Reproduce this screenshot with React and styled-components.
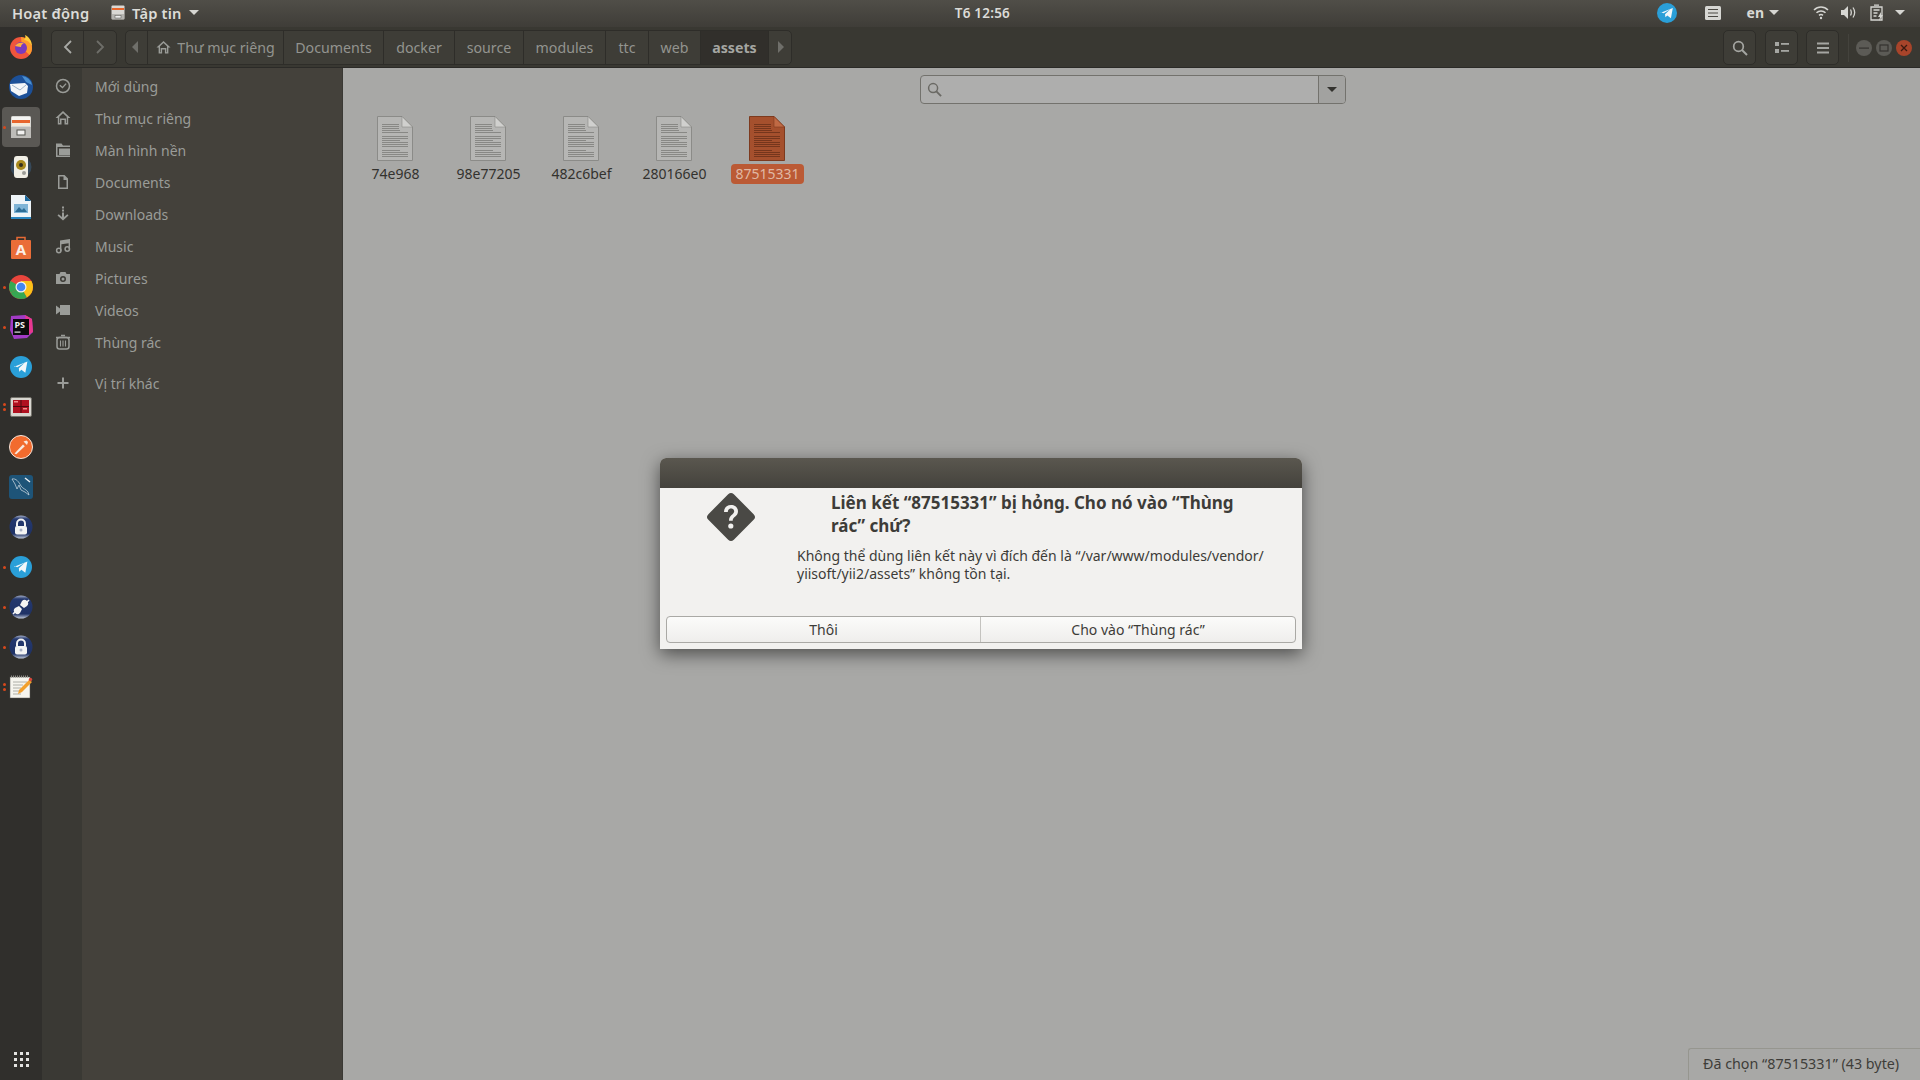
import styled, { createGlobalStyle } from 'styled-components';

const GlobalStyle = createGlobalStyle`
  html, body {
    margin: 0;
    padding: 0;
    background: #a8a8a6;
  }
  * {
    box-sizing: border-box;
  }
`;

const Screen = styled.div`
  position: relative;
  width: 1920px;
  height: 1080px;
  overflow: hidden;
  display: flex;
  flex-direction: column;
  font-family: "Noto Sans", "Open Sans", sans-serif;
`;

/* top panel */
const TopBar = styled.div`
  height: 27px;
  flex: none;
  display: grid;
  grid-template-columns: 1fr auto 910px;
  align-items: center;
  padding-bottom: 2px;
  background: linear-gradient(#504e48, #3f3d38);
  color: #dcdcd8;
  font-size: 14.7px;
  letter-spacing: 0.2px;
`;
const PanelLeft = styled.div`
  display: flex;
  align-items: center;
  padding-left: 12px;
`;
const PanelRight = styled.div`
  display: flex;
  align-items: center;
  justify-content: flex-end;
  padding-right: 14px;
`;
const ActivitiesLabel = styled.span`
  font-weight: 600;
  width: 99px;
`;
const AppMenu = styled.div`
  display: flex;
  align-items: center;
  gap: 7px;
  font-weight: 600;
`;
const ClockLabel = styled.span`
  font-size: 13.5px;
  font-weight: 600;
`;
const Caret = styled.i`
  display: block;
  width: 0;
  height: 0;
  border-left: 5px solid transparent;
  border-right: 5px solid transparent;
  border-top: 5px solid ${(props) => props.color || '#d6d6d2'};
`;
const Tray = styled.div`
  width: ${(props) => props.w}px;
  margin-right: ${(props) => props.mr || 0}px;
  display: flex;
  align-items: center;
  justify-content: center;
  gap: 5px;
`;
const LangLabel = styled.span`
  font-weight: 700;
  font-size: 14px;
  color: #d8d8d4;
`;

/* body */
const Body = styled.div`
  flex: 1;
  display: flex;
  min-height: 0;
`;
const Dock = styled.div`
  width: 42px;
  flex: none;
  display: flex;
  flex-direction: column;
  background: #302f2c;
`;
const DockItem = styled.div`
  position: relative;
  height: 40px;
  margin: 0 2px;
  display: flex;
  align-items: center;
  justify-content: center;
  border-radius: 4px;
  background: ${(props) => (props.active ? '#5a5854' : 'transparent')};
`;
const DockDots = styled.div`
  position: absolute;
  left: 1px;
  top: 0;
  bottom: 0;
  display: flex;
  flex-direction: column;
  justify-content: center;
  gap: 2px;
`;
const DockDot = styled.i`
  display: block;
  width: 3px;
  height: 3px;
  border-radius: 50%;
  background: #d8481c;
`;
const AppGrid = styled.div`
  margin-top: auto;
  margin-bottom: 13px;
  align-self: center;
  display: grid;
  grid-template-columns: repeat(3, 3px);
  gap: 3px;
`;
const AppGridDot = styled.i`
  display: block;
  width: 3px;
  height: 3px;
  background: #e4e4e2;
`;

const Win = styled.div`
  flex: 1;
  display: flex;
  flex-direction: column;
  min-width: 0;
`;
const Header = styled.div`
  height: 41px;
  flex: none;
  display: flex;
  align-items: center;
  padding: 1px 0 0 9px;
  background: #393832;
  border-bottom: 1px solid #2b2a27;
`;
const BtnGroup = styled.div`
  height: 35px;
  display: flex;
  border: 1px solid #2e2d29;
  border-radius: 5px;
  background: #3e3d37;
  margin-left: ${(props) => props.ml || 0}px;
`;
const SegBtn = styled.div`
  width: ${(props) => props.w}px;
  display: flex;
  align-items: center;
  justify-content: center;
  gap: 6px;
  padding: 0 ${(props) => props.pr || 0}px 1px ${(props) => props.pl || 0}px;
  color: ${(props) => (props.current ? '#a5a6a2' : '#93948f')};
  font-size: 14.2px;
  font-weight: ${(props) => (props.current ? 700 : 400)};
  background: ${(props) => (props.current ? '#312f2b' : 'transparent')};
  border-right: 1px solid #2e2d29;
  &:last-child {
    border-right: 0;
  }
`;
const ToolBtn = styled.div`
  width: 33px;
  height: 35px;
  margin-left: ${(props) => props.ml}px;
  display: flex;
  align-items: center;
  justify-content: center;
  border: 1px solid #2e2d29;
  border-radius: 5px;
  background: #3e3d37;
`;
const WinButtons = styled.div`
  margin-left: 9px;
  padding-left: 7px;
  border-left: 1px solid #44433d;
  height: 28px;
  display: flex;
  align-items: center;
  gap: 4px;
`;
const WinBtn = styled.div`
  width: 16px;
  height: 16px;
  border-radius: 50%;
  display: flex;
  align-items: center;
  justify-content: center;
  background: ${(props) => (props.close ? '#a8442a' : '#5c5b56')};
`;

const Content = styled.div`
  flex: 1;
  display: flex;
  min-height: 0;
`;
const Sidebar = styled.div`
  width: 301px;
  flex: none;
  padding-top: 2px;
  background: linear-gradient(90deg, #3a3934 0, #3a3934 40px, #44413b 40px);
  border-right: 1px solid #3a3934;
`;
const SideRow = styled.div`
  height: 32px;
  display: flex;
  align-items: center;
  margin-top: ${(props) => props.mt || 0}px;
  color: #9a9c98;
  font-size: 14px;
`;
const SideIcon = styled.div`
  width: 41px;
  flex: none;
  display: flex;
  justify-content: center;
  margin-right: 12px;
`;
const Main = styled.div`
  position: relative;
  flex: 1;
  display: flex;
  flex-direction: column;
  background: #a8a8a6;
`;
const SearchRow = styled.div`
  display: flex;
  padding: 7px 0 0 577px;
`;
const SearchBox = styled.div`
  width: 426px;
  height: 29px;
  display: flex;
  align-items: center;
  justify-content: space-between;
  border: 1px solid #73726d;
  border-radius: 4px;
  background: #aeaead;
  padding-left: 6px;
`;
const SearchDrop = styled.div`
  width: 27px;
  height: 100%;
  display: flex;
  align-items: center;
  justify-content: center;
  border-left: 1px solid #73726d;
  background: #a2a2a0;
  border-radius: 0 3px 3px 0;
`;
const FileGrid = styled.div`
  display: flex;
  gap: 0;
  padding: 12px 0 0 5px;
`;
const FileCell = styled.div`
  width: 93px;
  display: flex;
  flex-direction: column;
  align-items: center;
  gap: 3px;
`;
const FileName = styled.span`
  height: 20px;
  line-height: 19px;
  padding: 0 4px;
  margin-left: 2px;
  border-radius: 4px;
  font-size: 14px;
  color: ${(props) => (props.selected ? '#e0b8a4' : '#33322e')};
  background: ${(props) => (props.selected ? '#bb5a35' : 'transparent')};
`;
const StatusTag = styled.div`
  position: absolute;
  right: 0;
  bottom: 0;
  width: 232px;
  height: 32px;
  padding: 0 0 2px 14px;
  display: flex;
  align-items: center;
  font-size: 14.3px;
  color: #3e3d39;
  background: #a8a8a6;
  border-top: 1px solid #96968f;
  border-left: 1px solid #96968f;
  border-top-left-radius: 3px;
`;

/* dialog */
const Dialog = styled.div`
  position: absolute;
  left: 660px;
  top: 458px;
  width: 642px;
  height: 191px;
  display: flex;
  flex-direction: column;
  border-radius: 6px 6px 0 0;
  background: #f2f1ef;
  box-shadow: 0 5px 18px rgba(0, 0, 0, 0.55);
`;
const DialogTitle = styled.div`
  height: 30px;
  flex: none;
  border-radius: 6px 6px 0 0;
  background: linear-gradient(#5a574f, #44423c);
`;
const DialogBody = styled.div`
  flex: 1;
  position: relative;
  padding: 3px 0 0 137px;
  color: #3d3c38;
`;
const QuestionWrap = styled.div`
  position: absolute;
  left: 46px;
  top: 4px;
`;
const DialogHeading = styled.div`
  margin-left: 34px;
  width: 410px;
  font-size: 17px;
  font-weight: 700;
  line-height: 23px;
`;
const DialogText = styled.div`
  margin-top: 10px;
  width: 490px;
  font-size: 14px;
  line-height: 18px;
`;
const DialogActions = styled.div`
  margin: 0 6px 6px 6px;
  height: 27px;
  flex: none;
  display: grid;
  grid-template-columns: 313px 1fr;
  border: 1px solid #aaa9a5;
  border-radius: 4px;
  background: linear-gradient(#fbfbfa, #efeeec);
`;
const DialogBtn = styled.div`
  display: flex;
  align-items: center;
  justify-content: center;
  font-size: 14px;
  color: #3d3c38;
  & + & {
    border-left: 1px solid #c4c3bf;
  }
`;

/* drawings */
const Sym = ({ size = 16, color = '#9a9c98', children }) => (
  <svg width={size} height={size} viewBox="0 0 16 16" fill={color} stroke="none">
    {children}
  </svg>
);

const sideIcons = {
  clock: (
    <>
      <circle cx="8" cy="8" r="6.500" fill="none" stroke="#9a9c98" strokeWidth="1.500" />
      <path d="M4.800 7.200l2.700 2.400 3.600-4" fill="none" stroke="#9a9c98" strokeWidth="1.400" />
    </>
  ),
  home: (
    <path
      d="M8 1L0.500 8h2.300v6.500h3.700V10h3v4.500h3.700V8h2.300L8 1zM8 3.200l3.700 3.500v6.300h-.7V8.500H5V13h-.7V6.700L8 3.200z"
      fillRule="evenodd"
    />
  ),
  folder: (
    <>
      <path d="M1 1.500h5.500L8 3.500h7v1.500H1z" />
      <path d="M1 5h1.500v8.500H15V15H1zM4 6.500h11V13H4z" />
    </>
  ),
  file: <path d="M3 1h6.500L13 4.500V15H3V1zm1.500 1.500v11h7V6H8.500V2.500h-4z" fillRule="evenodd" />,
  download: (
    <>
      <rect x="7" y="0.500" width="2" height="2" />
      <rect x="7" y="3.500" width="2" height="2" />
      <path d="M7 6.500h2V11l3.300-2.800 1.200 1.300L8 14.500 2.500 9.500l1.200-1.300L7 11V6.500z" />
    </>
  ),
  music: (
    <>
      <path d="M5 2.500L15 1v10h-1.400V5.200L6.400 6.200V13H5V2.500z" />
      <circle cx="3.800" cy="12.500" r="2.200" fill="none" stroke="#9a9c98" strokeWidth="1.500" />
      <circle cx="12.300" cy="11" r="2.200" fill="none" stroke="#9a9c98" strokeWidth="1.500" />
    </>
  ),
  camera: (
    <path
      d="M5.500 2h5l1 2H15v10H1V4h3.500l1-2zM8 6a3 3 0 100 6 3 3 0 000-6zm0 1.500a1.500 1.500 0 110 3 1.500 1.500 0 010-3z"
      fillRule="evenodd"
    />
  ),
  video: <path d="M5 3h10v10H5V9.500L1 12.500v-9l4 3V3z" />,
  trash: (
    <>
      <path d="M1 3.500h14M6 1.500h4" stroke="#9a9c98" strokeWidth="1.400" fill="none" />
      <rect x="2" y="3.500" width="12" height="11.500" rx="2.500" fill="none" stroke="#9a9c98" strokeWidth="1.500" />
      <path d="M5.500 6.500v6M8 6.500v6M10.500 6.500v6" stroke="#9a9c98" strokeWidth="1.100" fill="none" />
    </>
  ),
  plus: <path d="M7 2.500h2V7h4.500v2H9v4.500H7V9H2.500V7H7V2.500z" />,
};

const TelegramIcon = ({ size = 22 }) => (
  <svg width={size} height={size} viewBox="0 0 24 24">
    <circle cx="12" cy="12" r="12" fill="#2a9fd8" />
    <path d="M4.500 11.800L19 6l-2.300 12.200-4.300-3.200-2.300 2.200-.5-3.800 6.400-6-8 5-3.500-1.400z" fill="#f2f7fa" />
  </svg>
);

const LockIcon = () => (
  <svg width="24" height="24" viewBox="0 0 24 24">
    <defs>
      <linearGradient id="lockGlobe" x1="0" y1="0" x2="0" y2="1">
        <stop offset="0" stopColor="#a5afc8" />
        <stop offset="0.15" stopColor="#24386e" />
        <stop offset="0.8" stopColor="#1f3266" />
        <stop offset="1" stopColor="#c3cbdc" />
      </linearGradient>
    </defs>
    <circle cx="12" cy="12" r="11.500" fill="url(#lockGlobe)" />
    <path d="M8 11.500V8.500a4 4 0 018 0v3" fill="none" stroke="#f2f2f2" strokeWidth="2" />
    <rect x="6" y="11" width="12" height="8.500" rx="2" fill="#f4f4f4" />
    <circle cx="12" cy="15" r="1.500" fill="#a8b0c4" />
  </svg>
);

const dockIcons = [
  {
    key: 'firefox',
    icon: (
      <svg width="24" height="24" viewBox="0 0 24 24">
        <circle cx="12" cy="13" r="11" fill="#f0553c" />
        <path d="M12 2c6 1 11 5 11 11 0 3-1 5-2.500 7L13 13z" fill="#ff9a2c" />
        <path d="M16 0c1 2 0 4-1 5 3 0 6 2 8 6 0-5-3-9-7-11z" fill="#ffcb3a" />
        <circle cx="12" cy="13" r="6" fill="#7a3bbd" />
        <path d="M6 11c2-3 5-4 9-3-2 1-3 2-3 4-3 0-4-1-6-1z" fill="#ffb13a" />
      </svg>
    ),
  },
  {
    key: 'thunderbird',
    icon: (
      <svg width="24" height="24" viewBox="0 0 24 24">
        <circle cx="12" cy="12" r="12" fill="#1c5098" />
        <path d="M13 1a11 11 0 0110 9l-6-3z" fill="#4a8fd0" />
        <path d="M1 9l15-1 3 3-1 7-8 3-8-5z" fill="#f4f6f8" />
        <path d="M3 10l8 5 6-5" fill="none" stroke="#9fb3c8" strokeWidth="1" />
      </svg>
    ),
  },
  {
    key: 'files',
    active: true,
    dots: 1,
    icon: (
      <svg width="22" height="24" viewBox="0 0 22 24">
        <rect x="1" y="1" width="20" height="22" rx="1.500" fill="#d9d8d4" />
        <rect x="2" y="2" width="18" height="3" fill="#f4f4f2" />
        <rect x="2" y="5" width="18" height="3" fill="#e8662c" />
        <rect x="2" y="8" width="18" height="3" fill="#f5ead8" />
        <rect x="1" y="12" width="20" height="11" fill="#bdbcb8" />
        <rect x="7" y="15" width="8" height="5" fill="#f1f1ef" stroke="#55544f" />
      </svg>
    ),
  },
  {
    key: 'rhythmbox',
    icon: (
      <svg width="22" height="24" viewBox="0 0 22 24">
        <circle cx="11" cy="12" r="10.500" fill="#3b5a78" opacity="0.6" />
        <rect x="4" y="1" width="14" height="22" rx="3" fill="#f1efe6" />
        <circle cx="11" cy="10" r="5" fill="#a88a1e" />
        <circle cx="11" cy="10" r="2" fill="#332f20" />
        <circle cx="14" cy="18" r="2" fill="#9d9d98" />
      </svg>
    ),
  },
  {
    key: 'draw',
    icon: (
      <svg width="20" height="24" viewBox="0 0 20 24">
        <path d="M0 0h14l6 6v18H0z" fill="#eef4f8" />
        <path d="M14 0l6 6h-6z" fill="#1b6aa0" />
        <rect x="3" y="9" width="14" height="9" fill="#7fb4d6" />
        <path d="M4 17l4-5 3 3 2-2 3 4z" fill="#2c6d96" />
        <rect y="22" width="20" height="2" fill="#2a86c0" />
      </svg>
    ),
  },
  {
    key: 'software',
    icon: (
      <svg width="22" height="24" viewBox="0 0 22 24">
        <path d="M7 5V2.500h8V5" fill="none" stroke="#e66a34" strokeWidth="1.500" />
        <rect x="1" y="5" width="20" height="19" rx="1" fill="#ea6d38" />
        <text x="11" y="20" textAnchor="middle" fontFamily="Noto Sans, sans-serif" fontWeight="700" fontSize="15" fill="#fbeee6">
          A
        </text>
      </svg>
    ),
  },
  {
    key: 'chrome',
    dots: 1,
    icon: (
      <svg width="24" height="24" viewBox="0 0 24 24">
        <circle cx="12" cy="12" r="12" fill="#e8453c" />
        <path d="M12 12L1.600 18A12 12 0 0012 24a12 12 0 006-1.600z" fill="#36a852" />
        <path d="M12 12h12a12 12 0 00-1.600-6H12zM12 12l6 10.400A12 12 0 0024 12z" fill="#fbc118" />
        <path d="M12 12L1.600 6A12 12 0 000 12a12 12 0 001.600 6z" fill="#36a852" />
        <circle cx="12" cy="12" r="5.500" fill="#f4f4f4" />
        <circle cx="12" cy="12" r="4.300" fill="#4587f0" />
      </svg>
    ),
  },
  {
    key: 'phpstorm',
    dots: 1,
    icon: (
      <svg width="24" height="24" viewBox="0 0 24 24">
        <path d="M2 1l14-1 7 4 1 13-6 6-13 1-4-9z" fill="#a23bc6" />
        <path d="M16 0l7 4 1 13-5 3z" fill="#e8388e" />
        <rect x="4" y="4" width="16" height="16" fill="#0b0b0d" />
        <text x="5.500" y="13" fontFamily="Noto Sans, sans-serif" fontWeight="700" fontSize="9" fill="#f2f2f2">
          PS
        </text>
        <rect x="5.500" y="16.500" width="6" height="1.200" fill="#e4e4e4" />
      </svg>
    ),
  },
  { key: 'telegram', icon: <TelegramIcon /> },
  {
    key: 'redis',
    dots: 2,
    icon: (
      <svg width="22" height="20" viewBox="0 0 22 20">
        <rect x="0.500" y="0.500" width="21" height="19" rx="1.500" fill="#d8d6d0" stroke="#75736c" />
        <rect x="3" y="3" width="16" height="13" fill="#b01020" />
        <path d="M11 3v13M3 9.500h16" stroke="#4a0a10" strokeWidth="1" />
        <rect x="4" y="4" width="4" height="1.500" fill="#f28a8a" />
        <rect x="13" y="11" width="4" height="1.500" fill="#f28a8a" />
      </svg>
    ),
  },
  {
    key: 'postman',
    icon: (
      <svg width="24" height="24" viewBox="0 0 24 24">
        <circle cx="12" cy="12" r="11.500" fill="#f26b2e" stroke="#f5e6dc" strokeWidth="1" />
        <path d="M5.500 18.500L14 9.500l1.800 1.800-8.500 8z" fill="#f7e9df" />
        <path d="M14.500 6.500l3-1 1.500 1.500-1 3z" fill="#f7e9df" />
      </svg>
    ),
  },
  {
    key: 'workbench',
    icon: (
      <svg width="24" height="24" viewBox="0 0 24 24">
        <rect width="24" height="24" rx="3" fill="#1e5478" />
        <path d="M3 4c4-1 7 3 9 7 2 3 5 3 7 6l1 3-4-3-4-2-2-5-2 4-2-5z" fill="none" stroke="#d5dfe6" strokeWidth="0.700" />
        <path d="M16 3l5 4" stroke="#eef2f5" strokeWidth="1.500" />
      </svg>
    ),
  },
  { key: 'lock-a', icon: <LockIcon /> },
  { key: 'telegram-b', dots: 1, icon: <TelegramIcon /> },
  {
    key: 'plug',
    dots: 1,
    icon: (
      <svg width="24" height="24" viewBox="0 0 24 24">
        <circle cx="12" cy="12" r="11.500" fill="url(#lockGlobe)" />
        <path d="M4 19l3-3M20 5l-3 3" stroke="#f4f4f4" strokeWidth="1.600" />
        <path d="M6 13l4-2 3 3-2 4a3 3 0 01-5-5zM13 6a3 3 0 015 5l-3 2-4-3z" fill="#f4f4f4" />
      </svg>
    ),
  },
  { key: 'lock-b', dots: 1, icon: <LockIcon /> },
  {
    key: 'notes',
    dots: 2,
    icon: (
      <svg width="24" height="24" viewBox="0 0 24 24">
        <rect x="1" y="2" width="20" height="21" fill="#f6f5ee" stroke="#55544f" strokeWidth="0.500" />
        <path d="M2 1.500h18" stroke="#8d8c86" strokeWidth="2" strokeDasharray="1 1" />
        <path d="M4 7h14M4 10h10M4 13h8M4 16h8M4 19h8" stroke="#9d9c95" strokeWidth="0.800" />
        <path d="M9 19l1-4L20 5l3 2-10 10z" fill="#f2a02c" />
        <circle cx="21.500" cy="4.500" r="1.700" fill="#d8483c" />
      </svg>
    ),
  },
];

const sidebarItems = [
  { label: 'Mới dùng', icon: 'clock' },
  { label: 'Thư mục riêng', icon: 'home' },
  { label: 'Màn hình nền', icon: 'folder' },
  { label: 'Documents', icon: 'file' },
  { label: 'Downloads', icon: 'download' },
  { label: 'Music', icon: 'music' },
  { label: 'Pictures', icon: 'camera' },
  { label: 'Videos', icon: 'video' },
  { label: 'Thùng rác', icon: 'trash' },
  { label: 'Vị trí khác', icon: 'plus', mt: 9 },
];

const crumbs = [
  { label: 'Documents', w: 100 },
  { label: 'docker', w: 71 },
  { label: 'source', w: 69 },
  { label: 'modules', w: 82 },
  { label: 'ttc', w: 43 },
  { label: 'web', w: 52 },
  { label: 'assets', w: 68, current: true },
];

const files = ['74e968', '98e77205', '482c6bef', '280166e0', '87515331'];

const DocIcon = ({ selected }) => {
  const body = selected ? '#a5502d' : '#b6b6b4';
  const edge = selected ? '#7d3a1e' : '#8b8b88';
  const fold = selected ? '#c06a44' : '#d0d0ce';
  const line = selected ? '#6a3018' : '#7d7d7a';
  const lines = [8, 10, 12, 14, 16, 20, 22, 24, 26, 28, 30, 34, 36, 38, 40];
  return (
    <svg width="36" height="45" viewBox="0 0 36 45">
      <path d="M0.500 0.500H25L35.500 11V44.500H0.500z" fill={body} stroke={edge} />
      <path d="M25 0.500V11H35.500z" fill={fold} stroke={edge} strokeWidth="0.600" />
      {lines.map((y, i) => (
        <rect key={y} x="5" y={y} width={y < 14 ? 17 : i % 4 === 3 ? 18 : 26} height="0.800" fill={line} />
      ))}
    </svg>
  );
};

const App = () => {
  return (
    <Screen>
      <GlobalStyle />
      <TopBar>
        <PanelLeft>
          <ActivitiesLabel>Hoạt động</ActivitiesLabel>
          <AppMenu>
            <svg width="14" height="15" viewBox="0 0 14 15">
              <rect x="0.500" y="0.500" width="13" height="14" rx="1" fill="#d9d8d4" />
              <rect x="1" y="3" width="12" height="2" fill="#e8662c" />
              <rect x="1" y="9" width="12" height="5" fill="#b5b4b0" />
              <rect x="4" y="10.500" width="6" height="2.500" fill="#eee" stroke="#55544f" strokeWidth="0.500" />
            </svg>
            Tập tin
            <Caret />
          </AppMenu>
        </PanelLeft>
        <ClockLabel>T6 12:56</ClockLabel>
        <PanelRight>
          <Tray w={20} mr={28}>
            <TelegramIcon size={20} />
          </Tray>
          <Tray w={16} mr={25}>
            <svg width="16" height="14" viewBox="0 0 16 14">
              <rect width="16" height="14" rx="1.500" fill="#d6d6d2" />
              <path d="M3 3.500h10M3 7h10M3 10.500h10" stroke="#4a4842" strokeWidth="1" />
            </svg>
          </Tray>
          <Tray w={34} mr={26}>
            <LangLabel>en</LangLabel>
            <Caret />
          </Tray>
          <Tray w={30}>
            <svg width="16" height="15" viewBox="0 0 16 15" fill="none" stroke="#d6d6d2" strokeWidth="1.500">
              <path d="M1 5c4-4 10-4 14 0M3.500 7.800c2.500-2.500 6.500-2.500 9 0M6 10.300c1.200-1 2.800-1 4 0" />
              <circle cx="8" cy="13" r="1.200" fill="#d6d6d2" stroke="none" />
            </svg>
          </Tray>
          <Tray w={24}>
            <svg width="17" height="15" viewBox="0 0 17 15" fill="none" stroke="#d6d6d2" strokeWidth="1.300">
              <path d="M1 5h3l4-4v13l-4-4H1z" fill="#d6d6d2" stroke="none" />
              <path d="M10.500 4.500c1 1.800 1 4.200 0 6M13 2.500c2 3 2 7 0 10" />
            </svg>
          </Tray>
          <Tray w={34}>
            <svg width="14" height="17" viewBox="0 0 14 17" fill="none" stroke="#d6d6d2" strokeWidth="1.300">
              <path d="M4 1.200h5M1 3h11v13H1z" />
              <path d="M3.500 6h6M3.500 9h4M3.500 12h3" />
              <path d="M11 8l-3 5h2l-1 4 4-6h-2z" fill="#d6d6d2" stroke="none" />
            </svg>
          </Tray>
          <Tray w={12}>
            <Caret />
          </Tray>
        </PanelRight>
      </TopBar>
      <Body>
        <Dock>
          {dockIcons.map((item) => (
            <DockItem key={item.key} active={item.active}>
              {item.dots && (
                <DockDots>
                  {Array.from({ length: item.dots }).map((_, i) => (
                    <DockDot key={i} />
                  ))}
                </DockDots>
              )}
              {item.icon}
            </DockItem>
          ))}
          <AppGrid>
            {Array.from({ length: 9 }).map((_, i) => (
              <AppGridDot key={i} />
            ))}
          </AppGrid>
        </Dock>
        <Win>
          <Header>
            <BtnGroup>
              <SegBtn w={32}>
                <svg width="12" height="14" viewBox="0 0 12 14" fill="none" stroke="#a9aaa6" strokeWidth="1.800">
                  <path d="M9 1L3 7l6 6" />
                </svg>
              </SegBtn>
              <SegBtn w={32}>
                <svg width="12" height="14" viewBox="0 0 12 14" fill="none" stroke="#6e6e69" strokeWidth="1.800">
                  <path d="M3 1l6 6-6 6" />
                </svg>
              </SegBtn>
            </BtnGroup>
            <BtnGroup ml={8}>
              <SegBtn w={22} pr={4}>
                <svg width="6" height="12" viewBox="0 0 6 12">
                  <path d="M6 0v12L0 6z" fill="#6f6f6a" />
                </svg>
              </SegBtn>
              <SegBtn w={136}>
                <Sym size={15} color="#9a9c98">
                  {sideIcons.home}
                </Sym>
                Thư mục riêng
              </SegBtn>
              {crumbs.map((crumb) => (
                <SegBtn key={crumb.label} w={crumb.w} current={crumb.current}>
                  {crumb.label}
                </SegBtn>
              ))}
              <SegBtn w={22} pl={2}>
                <svg width="6" height="12" viewBox="0 0 6 12">
                  <path d="M0 0v12l6-6z" fill="#6f6f6a" />
                </svg>
              </SegBtn>
            </BtnGroup>
            <ToolBtn ml={931}>
              <svg width="16" height="16" viewBox="0 0 16 16" fill="none" stroke="#a5a6a2" strokeWidth="1.700">
                <circle cx="6.500" cy="6.500" r="4.800" />
                <path d="M10 10l5 5" strokeWidth="2" />
              </svg>
            </ToolBtn>
            <ToolBtn ml={9}>
              <svg width="14" height="12" viewBox="0 0 14 12" fill="#a5a6a2">
                <rect width="4" height="4" />
                <rect y="7" width="4" height="4" />
                <rect x="6" y="1" width="8" height="1.800" />
                <rect x="6" y="8" width="8" height="1.800" />
              </svg>
            </ToolBtn>
            <ToolBtn ml={8}>
              <svg width="12" height="12" viewBox="0 0 12 12" fill="#a5a6a2">
                <rect y="0.500" width="12" height="2" />
                <rect y="5" width="12" height="2" />
                <rect y="9.500" width="12" height="2" />
              </svg>
            </ToolBtn>
            <WinButtons>
              <WinBtn>
                <svg width="10" height="10" viewBox="0 0 10 10">
                  <rect x="0" y="4.500" width="10" height="1.200" fill="#34332f" />
                </svg>
              </WinBtn>
              <WinBtn>
                <svg width="10" height="10" viewBox="0 0 10 10">
                  <rect x="1" y="2" width="8" height="6" fill="none" stroke="#34332f" strokeWidth="1.200" />
                </svg>
              </WinBtn>
              <WinBtn close>
                <svg width="10" height="10" viewBox="0 0 10 10">
                  <path d="M2 2l6 6M8 2l-6 6" stroke="#3a1a10" strokeWidth="1.300" />
                </svg>
              </WinBtn>
            </WinButtons>
          </Header>
          <Content>
            <Sidebar>
              {sidebarItems.map((item) => (
                <SideRow key={item.label} mt={item.mt}>
                  <SideIcon>
                    <Sym>{sideIcons[item.icon]}</Sym>
                  </SideIcon>
                  {item.label}
                </SideRow>
              ))}
            </Sidebar>
            <Main>
              <SearchRow>
                <SearchBox>
                  <svg width="15" height="15" viewBox="0 0 16 16" fill="none" stroke="#6a6964" strokeWidth="1.600">
                    <circle cx="6.500" cy="6.500" r="4.800" />
                    <path d="M10 10l5 5" strokeWidth="2" />
                  </svg>
                  <SearchDrop>
                    <Caret color="#33322e" />
                  </SearchDrop>
                </SearchBox>
              </SearchRow>
              <FileGrid>
                {files.map((name, i) => (
                  <FileCell key={name}>
                    <DocIcon selected={i === 4} />
                    <FileName selected={i === 4}>{name}</FileName>
                  </FileCell>
                ))}
              </FileGrid>
              <StatusTag>Đã chọn “87515331” (43 byte)</StatusTag>
            </Main>
          </Content>
        </Win>
      </Body>
      <Dialog>
        <DialogTitle />
        <DialogBody>
          <QuestionWrap>
            <svg width="50" height="50" viewBox="0 0 50 50">
              <rect x="7" y="7" width="36" height="36" rx="4" transform="rotate(45 25 25)" fill="#4a4945" />
              <path
                d="M18 20c0-4.500 3.200-7 7-7s7 2.500 7 6.200c0 5.300-5.300 5.300-5.300 9.500h-3.700c0-5.800 5.200-6.300 5.200-9.500 0-1.600-1.300-2.800-3.200-2.800s-3.200 1.300-3.200 3.600z"
                fill="#f2f1ef"
              />
              <circle cx="24.800" cy="34" r="2.600" fill="#f2f1ef" />
            </svg>
          </QuestionWrap>
          <DialogHeading>Liên kết “87515331” bị hỏng. Cho nó vào “Thùng rác” chứ?</DialogHeading>
          <DialogText>
            Không thể dùng liên kết này vì đích đến là “/var/www/modules/vendor/
            <br />
            yiisoft/yii2/assets” không tồn tại.
          </DialogText>
        </DialogBody>
        <DialogActions>
          <DialogBtn>Thôi</DialogBtn>
          <DialogBtn>Cho vào “Thùng rác”</DialogBtn>
        </DialogActions>
      </Dialog>
    </Screen>
  );
};

export default App;
